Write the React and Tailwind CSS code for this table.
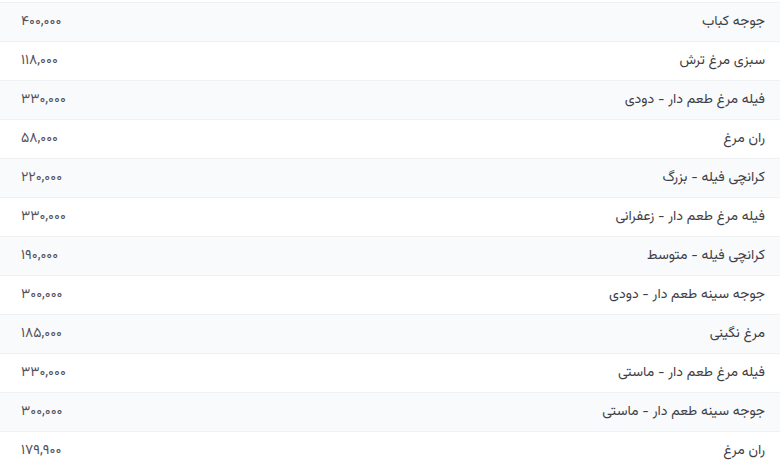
const items = [
  { name: "جوجه کباب", price: "۴۰۰,۰۰۰" },
  { name: "سبزی مرغ ترش", price: "۱۱۸,۰۰۰" },
  { name: "فیله مرغ طعم دار - دودی", price: "۳۳۰,۰۰۰" },
  { name: "ران مرغ", price: "۵۸,۰۰۰" },
  { name: "کرانچی فیله - بزرگ", price: "۲۲۰,۰۰۰" },
  { name: "فیله مرغ طعم دار - زعفرانی", price: "۳۳۰,۰۰۰" },
  { name: "کرانچی فیله - متوسط", price: "۱۹۰,۰۰۰" },
  { name: "جوجه سینه طعم دار - دودی", price: "۳۰۰,۰۰۰" },
  { name: "مرغ نگینی", price: "۱۸۵,۰۰۰" },
  { name: "فیله مرغ طعم دار - ماستی", price: "۳۳۰,۰۰۰" },
  { name: "جوجه سینه طعم دار - ماستی", price: "۳۰۰,۰۰۰" },
  { name: "ران مرغ", price: "۱۷۹,۹۰۰" },
];

export default function App() {
  return (
    <div
      dir="rtl"
      className="w-[780px] h-[470px] overflow-hidden bg-white pt-[2px] text-[14px] text-[#3f3f46]"
      style={{ fontFamily: '"Vazirmatn", "Noto Sans Arabic", "DejaVu Sans", sans-serif' }}
    >
      {items.map((item, i) => (
        <div
          key={i}
          className={`flex h-[39px] items-center justify-between border-t border-[#f0f1f3] pr-[15px] pl-[21px] ${
            i % 2 === 0 ? "bg-[#f9fafb]" : "bg-white"
          }`}
        >
          <span>{item.name}</span>
          <span className="tracking-[0.6px] text-[#52525b]">{item.price}</span>
        </div>
      ))}
    </div>
  );
}
